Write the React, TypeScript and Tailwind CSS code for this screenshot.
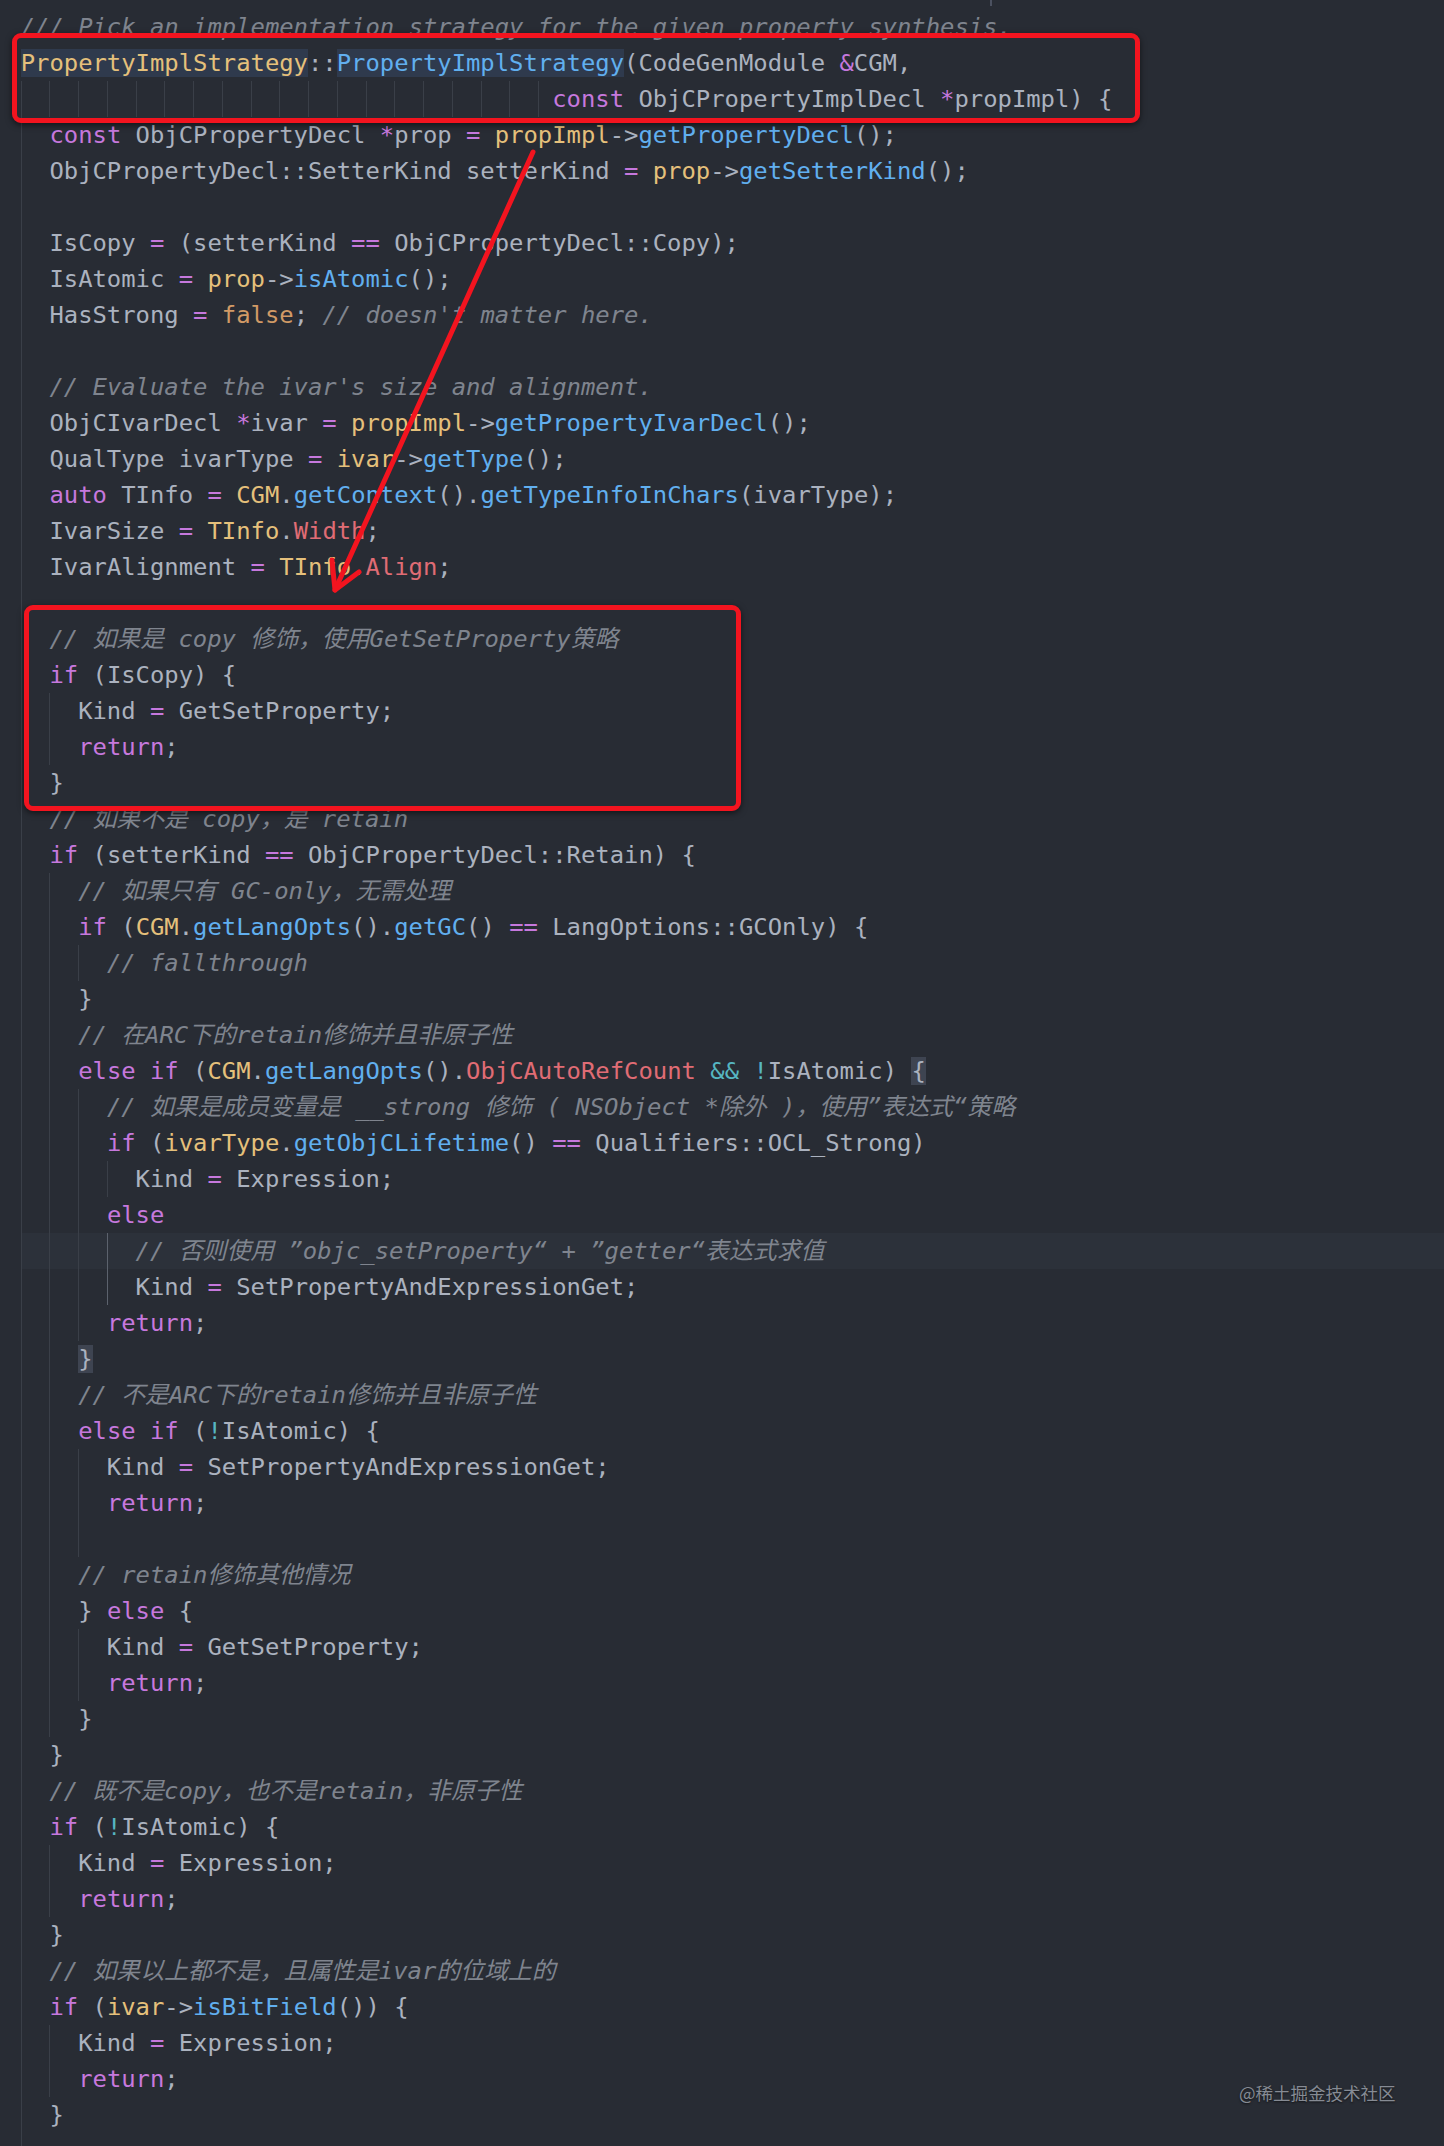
import React from 'react';

const CW = 14.37;

const RAW: string[] = [
  "[m|/// Pick an implementation strategy for the given property synthesis.]",
  "[Y|PropertyImplStrategy]::[F|PropertyImplStrategy](CodeGenModule [k|&]CGM,",
  "                                     [k|const] ObjCPropertyImplDecl [k|*]propImpl) {",
  "  [k|const] ObjCPropertyDecl [k|*]prop [k|=] [y|propImpl]->[f|getPropertyDecl]();",
  "  ObjCPropertyDecl::SetterKind setterKind [k|=] [y|prop]->[f|getSetterKind]();",
  "",
  "  IsCopy [k|=] (setterKind [k|==] ObjCPropertyDecl::Copy);",
  "  IsAtomic [k|=] [y|prop]->[f|isAtomic]();",
  "  HasStrong [k|=] [o|false]; [m|// doesn't matter here.]",
  "",
  "  [m|// Evaluate the ivar's size and alignment.]",
  "  ObjCIvarDecl [k|*]ivar [k|=] [y|propImpl]->[f|getPropertyIvarDecl]();",
  "  QualType ivarType [k|=] [y|ivar]->[f|getType]();",
  "  [k|auto] TInfo [k|=] [y|CGM].[f|getContext]().[f|getTypeInfoInChars](ivarType);",
  "  IvarSize [k|=] [y|TInfo].[r|Width];",
  "  IvarAlignment [k|=] [y|TInfo].[r|Align];",
  "",
  "  [m|// 如果是 copy 修饰，使用GetSetProperty策略]",
  "  [k|if] (IsCopy) {",
  "    Kind [k|=] GetSetProperty;",
  "    [k|return];",
  "  }",
  "  [m|// 如果不是 copy，是 retain]",
  "  [k|if] (setterKind [k|==] ObjCPropertyDecl::Retain) {",
  "    [m|// 如果只有 GC-only，无需处理]",
  "    [k|if] ([y|CGM].[f|getLangOpts]().[f|getGC]() [k|==] LangOptions::GCOnly) {",
  "      [m|// fallthrough]",
  "    }",
  "    [m|// 在ARC下的retain修饰并且非原子性]",
  "    [k|else] [k|if] ([y|CGM].[f|getLangOpts]().[r|ObjCAutoRefCount] [c|&&] [c|!]IsAtomic) [B|{]",
  "      [m|// 如果是成员变量是 __strong 修饰 ( NSObject *除外 )，使用”表达式“策略]",
  "      [k|if] ([y|ivarType].[f|getObjCLifetime]() [k|==] Qualifiers::OCL_Strong)",
  "        Kind [k|=] Expression;",
  "      [k|else]",
  "        [m|// 否则使用 ”objc_setProperty“ + ”getter“表达式求值]",
  "        Kind [k|=] SetPropertyAndExpressionGet;",
  "      [k|return];",
  "    [B|}]",
  "    [m|// 不是ARC下的retain修饰并且非原子性]",
  "    [k|else] [k|if] ([c|!]IsAtomic) {",
  "      Kind [k|=] SetPropertyAndExpressionGet;",
  "      [k|return];",
  "",
  "    [m|// retain修饰其他情况]",
  "    } [k|else] {",
  "      Kind [k|=] GetSetProperty;",
  "      [k|return];",
  "    }",
  "  }",
  "  [m|// 既不是copy，也不是retain，非原子性]",
  "  [k|if] ([c|!]IsAtomic) {",
  "    Kind [k|=] Expression;",
  "    [k|return];",
  "  }",
  "  [m|// 如果以上都不是，且属性是ivar的位域上的]",
  "  [k|if] ([y|ivar]->[f|isBitField]()) {",
  "    Kind [k|=] Expression;",
  "    [k|return];",
  "  }",
  "",
];

const CLS: Record<string, string> = {
  d: 'text-[#abb2bf]',
  k: 'text-[#c678dd]',
  f: 'text-[#61afef]',
  y: 'text-[#e5c07b]',
  r: 'text-[#e06c75]',
  o: 'text-[#d19a66]',
  c: 'text-[#56b6c2]',
  m: 'text-[#7f848e] italic',
  Y: 'text-[#e5c07b] bg-[#2f3a4d]',
  F: 'text-[#61afef] bg-[#2f3a4d]',
  B: 'text-[#abb2bf] bg-[#3e4451]',
};

function parse(s: string): [string, string][] {
  const out: [string, string][] = [];
  const re = /\[(\w)\|([^\]]*)\]/g;
  let last = 0;
  let m: RegExpExecArray | null;
  while ((m = re.exec(s)) !== null) {
    if (m.index > last) out.push(['d', s.slice(last, m.index)]);
    out.push([m[1], m[2]]);
    last = m.index + m[0].length;
  }
  if (last < s.length) out.push(['d', s.slice(last)]);
  return out;
}

function indentOf(s: string): number {
  const m = s.match(/^ */);
  return m ? m[0].length : 0;
}

const indents = RAW.map((s) => (s.length === 0 ? -1 : indentOf(s)));
const guideIndents = indents.map((n, i) => {
  if (n >= 0) return n;
  let p = 0;
  for (let j = i - 1; j >= 0; j--) if (indents[j] >= 0) { p = indents[j]; break; }
  let q = 2;
  for (let j = i + 1; j < indents.length; j++) if (indents[j] >= 0) { q = indents[j]; break; }
  return Math.max(p, q);
});

function CodeLine({ s, i }: { s: string; i: number }) {
  const n = guideIndents[i];
  const guides: number[] = [];
  for (let c = 0; c < n; c += 2) guides.push(c);
  const current = i === 34;
  const toks = parse(s);
  return (
    <div className={current ? 'relative h-[36px] leading-[36px] whitespace-pre bg-[#2c313a]' : 'relative h-[36px] leading-[36px] whitespace-pre'}>
      {guides.map((c) => {
        const active = (i === 34 || i === 35) && c === 6;
        return (
          <span
            key={c}
            className={active ? 'absolute top-0 h-full w-px bg-[#5c626d]' : 'absolute top-0 h-full w-px bg-[#3a3f48]'}
            style={{ left: c * CW }}
          />
        );
      })}
      <span className="relative">
        {toks.map(([k, t], j) => (
          <span key={j} className={CLS[k]}>{t}</span>
        ))}
      </span>
    </div>
  );
}

export default function App() {
  return (
    <div className="relative w-[1444px] h-[2146px] overflow-hidden bg-[#282c34]">
      <div className="absolute left-[990px] top-0 w-[2px] h-[6px] bg-[#4b5160]" />
      <div className="pt-[9.4px] ml-[20.7px] font-[family-name:'DejaVu_Sans_Mono','Noto_Sans_CJK_SC',monospace] text-[23.87px] text-[#abb2bf]">
        {RAW.map((s, i) => (
          <CodeLine key={i} s={s} i={i} />
        ))}
      </div>

      <div className="absolute left-[12px] top-[33px] w-[1128px] h-[90px] rounded-[9px] border-[5px] border-[#f3141f] shadow-[0_2px_6px_rgba(0,0,0,0.55)]" />
      <div className="absolute left-[24px] top-[605px] w-[717px] h-[206px] rounded-[9px] border-[5px] border-[#f3141f] shadow-[0_2px_6px_rgba(0,0,0,0.55)]" />

      <svg className="absolute left-0 top-0 pointer-events-none" width="1444" height="2146" viewBox="0 0 1444 2146">
        <g stroke="#f3141f" strokeWidth="5" strokeLinecap="round" strokeLinejoin="round" fill="none">
          <line x1="533" y1="152" x2="335" y2="590" />
          <polyline points="359,572 335,590 332,560" />
        </g>
      </svg>

      <div className="absolute left-[1239px] top-[2079px] font-[family-name:'Noto_Sans_CJK_SC',sans-serif] text-[17.5px] leading-[28px] text-[#868b94] [text-shadow:0_1px_2px_rgba(0,0,0,0.6)]">
        @稀土掘金技术社区
      </div>
    </div>
  );
}
